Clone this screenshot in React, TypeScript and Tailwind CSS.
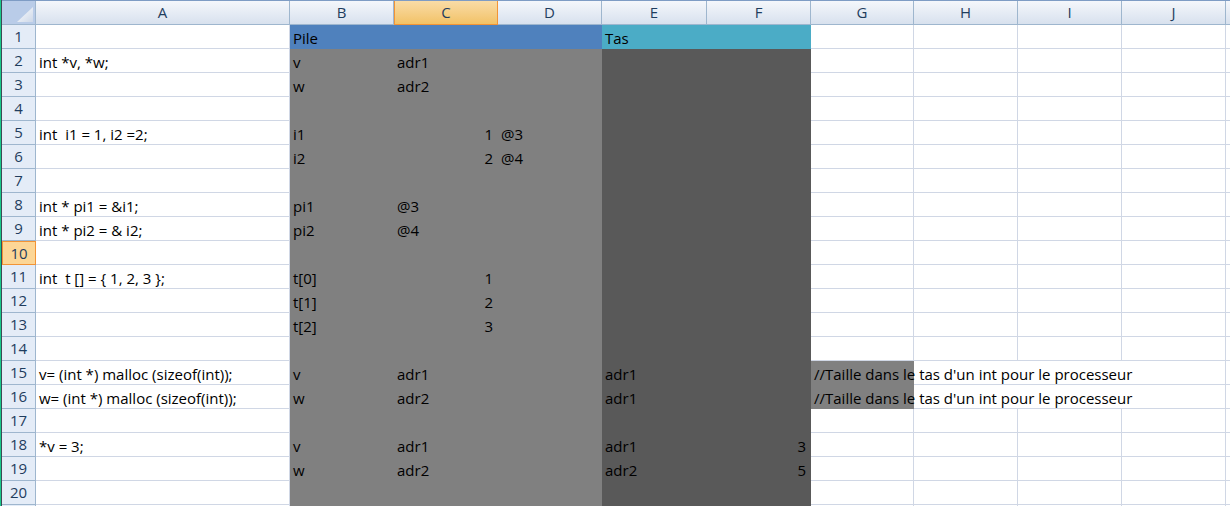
import React from "react";

type Cell = { t: string; right?: boolean };

const COLS = ["A", "B", "C", "D", "E", "F", "G", "H", "I", "J", ""];
const COMMENT = "//Taille dans le tas d'un int pour le processeur";

const DATA: Record<number, Record<string, Cell>> = {
  1: { B: { t: "Pile" }, E: { t: "Tas" } },
  2: { A: { t: "int *v, *w;" }, B: { t: "v" }, C: { t: "adr1" } },
  3: { B: { t: "w" }, C: { t: "adr2" } },
  5: { A: { t: "int  i1 = 1, i2 =2;" }, B: { t: "i1" }, C: { t: "1", right: true }, D: { t: "@3" } },
  6: { B: { t: "i2" }, C: { t: "2", right: true }, D: { t: "@4" } },
  8: { A: { t: "int * pi1 = &i1;" }, B: { t: "pi1" }, C: { t: "@3" } },
  9: { A: { t: "int * pi2 = & i2;" }, B: { t: "pi2" }, C: { t: "@4" } },
  11: { A: { t: "int  t [] = { 1, 2, 3 };" }, B: { t: "t[0]" }, C: { t: "1", right: true } },
  12: { B: { t: "t[1]" }, C: { t: "2", right: true } },
  13: { B: { t: "t[2]" }, C: { t: "3", right: true } },
  15: { A: { t: "v= (int *) malloc (sizeof(int));" }, B: { t: "v" }, C: { t: "adr1" }, E: { t: "adr1" }, G: { t: COMMENT } },
  16: { A: { t: "w= (int *) malloc (sizeof(int));" }, B: { t: "w" }, C: { t: "adr2" }, E: { t: "adr1" }, G: { t: COMMENT } },
  18: { A: { t: "*v = 3;" }, B: { t: "v" }, C: { t: "adr1" }, E: { t: "adr1" }, F: { t: "3", right: true } },
  19: { B: { t: "w" }, C: { t: "adr2" }, E: { t: "adr2" }, F: { t: "5", right: true } },
};

// row 21 only peeks in by two pixels at the bottom
const ROWS = Array.from({ length: 21 }, (_, i) => i + 1);

// fill colour of a cell, or "" when it keeps the grid lines
function fill(row: number, col: string) {
  if (row === 1) {
    if (col === "B" || col === "C" || col === "D") return "bg-[#4f81bd] border-[#4f81bd]";
    if (col === "E" || col === "F") return "bg-[#4bacc6] border-[#4bacc6]";
    return "";
  }
  if (col === "B" || col === "C" || col === "D") return "bg-[#808080] border-[#808080]";
  if (col === "E" || col === "F") return "bg-[#595959] border-[#595959]";
  if (col === "G" && (row === 15 || row === 16)) return "bg-[#808080] border-[#808080]";
  return "";
}

function ColHeader({ letter }: { letter: string }) {
  if (letter === "C") {
    return (
      <div className="h-6 flex items-center justify-center border border-t-0 border-[#f29436] bg-gradient-to-b from-[#f9dca6] to-[#f2c266] text-[#1f3d5e]">
        {letter}
      </div>
    );
  }
  return (
    <div className="h-6 flex items-center justify-center border-r border-b border-[#9eb6ce] bg-gradient-to-b from-[#f4f7fb] to-[#d8e1ee] text-[#1f3d5e]">
      {letter}
    </div>
  );
}

function RowHeader({ n }: { n: number }) {
  if (n === 10) {
    return (
      <div className="h-6 flex items-center justify-center border border-[#f29436] bg-[#fcd696] text-[#1f3d5e]">
        {n}
      </div>
    );
  }
  return (
    <div className="h-6 flex items-center justify-center border-r border-b border-[#9eb6ce] bg-[#e4ecf7] text-[#1f3d5e]">
      {n <= 20 ? n : ""}
    </div>
  );
}

function DataCell({ row, col }: { row: number; col: string }) {
  const cell = DATA[row]?.[col];
  const f = fill(row, col);
  const overflowed = (row === 15 || row === 16) && (col === "H" || col === "I");
  const border = f
    ? "border-r border-b"
    : overflowed
      ? "border-b border-[#d0d7e5]"
      : "border-r border-b border-[#d0d7e5]";
  return (
    <div className={`h-6 flex items-end pl-[3px] pr-[4px] pb-[1px] ${border} ${f} ${cell?.right ? "justify-end" : ""}`}>
      {cell && (
        <span className="relative z-10 whitespace-pre leading-[18px] text-black">{cell.t}</span>
      )}
    </div>
  );
}

export default function App() {
  return (
    <div
      className="w-[1230px] h-[506px] overflow-hidden bg-white flex text-[15px]"
      style={{ fontFamily: "'Open Sans', 'Liberation Sans', sans-serif" }}
    >
      <div className="w-px bg-[#19c98a] shrink-0" />
      <div className="w-px bg-[#3d4a55] shrink-0" />
      <div className="grid grid-cols-[34px_254px_104px_104px_104px_105px_104px_103px_104px_104px_104px_20px] content-start border-t border-[#7e9cc4]">
        {/* corner */}
        <div className="h-6 border-r border-b border-[#9eb6ce] bg-[#b9cce8] flex items-end justify-end pr-[2px] pb-[2px]">
          <div
            className="w-[16px] h-[15px] bg-gradient-to-br from-[#ffffff] to-[#cdd8e8]"
            style={{ clipPath: "polygon(100% 0, 100% 100%, 0 100%)" }}
          />
        </div>
        {COLS.map((c, i) => (
          <ColHeader key={i} letter={c} />
        ))}
        {ROWS.map((r) => (
          <React.Fragment key={r}>
            <RowHeader n={r} />
            {COLS.map((c, i) => (
              <DataCell key={i} row={r} col={c} />
            ))}
          </React.Fragment>
        ))}
      </div>
    </div>
  );
}
